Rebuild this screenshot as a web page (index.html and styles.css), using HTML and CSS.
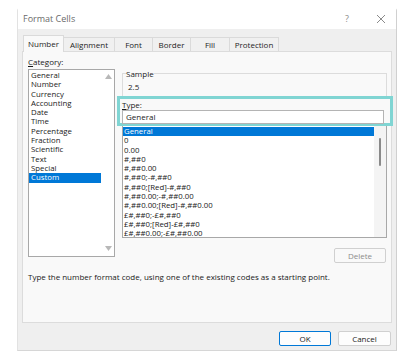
FILE: index.html
```html
<!DOCTYPE html>
<html lang="en">
<head>
  <meta charset="UTF-8" />
  <meta name="viewport" content="width=device-width, initial-scale=1.0"/>
  <title>Format Cells</title>
  <link rel="stylesheet" href="styles.css">
</head>
<body>
  <div class="dialog">
    <div class="titlebar">
      <span class="title">Format Cells</span>
      <span class="help">?</span>
      <svg class="close" width="10" height="10" viewBox="0 0 10 10"><path d="M1 1L9 9M9 1L1 9" stroke="#8a8a8a" stroke-width="1"/></svg>
    </div>
    <div class="body">
      <div class="tabs">
        <div class="tab active">Number</div>
        <div class="tab">Alignment</div>
        <div class="tab">Font</div>
        <div class="tab">Border</div>
        <div class="tab">Fill</div>
        <div class="tab">Protection</div>
      </div>
      <div class="panel">
        <div class="columns">
          <div class="left">
            <div class="label"><u>C</u>ategory:</div>
            <div class="catlist">
              <div class="items">
                <div class="item">General</div>
                <div class="item">Number</div>
                <div class="item">Currency</div>
                <div class="item">Accounting</div>
                <div class="item">Date</div>
                <div class="item">Time</div>
                <div class="item">Percentage</div>
                <div class="item">Fraction</div>
                <div class="item">Scientific</div>
                <div class="item">Text</div>
                <div class="item">Special</div>
                <div class="item selected">Custom</div>
              </div>
              <div class="vscroll">
                <svg width="7" height="5" viewBox="0 0 7 5"><path d="M0 5L3.5 0L7 5Z" fill="#b8b8b8"/></svg>
                <svg width="7" height="5" viewBox="0 0 7 5"><path d="M0 0L3.5 5L7 0Z" fill="#b8b8b8"/></svg>
              </div>
            </div>
          </div>
          <div class="right">
            <fieldset class="sample">
              <legend>Sample</legend>
              <div class="sample-value">2.5</div>
            </fieldset>
            <div class="type-box">
              <div class="label"><u>T</u>ype:</div>
              <div class="type-input">General</div>
            </div>
            <div class="fmtlist">
              <div class="items">
                <div class="item selected">General</div>
                <div class="item">0</div>
                <div class="item">0.00</div>
                <div class="item">#,##0</div>
                <div class="item">#,##0.00</div>
                <div class="item">#,##0;-#,##0</div>
                <div class="item">#,##0;[Red]-#,##0</div>
                <div class="item">#,##0.00;-#,##0.00</div>
                <div class="item">#,##0.00;[Red]-#,##0.00</div>
                <div class="item">£#,##0;-£#,##0</div>
                <div class="item">£#,##0;[Red]-£#,##0</div>
                <div class="item">£#,##0.00;-£#,##0.00</div>
              </div>
              <div class="fmtscroll"><div class="thumb"></div></div>
            </div>
            <div class="delete-row">
              <div class="btn disabled">Delete</div>
            </div>
          </div>
        </div>
        <div class="desc">Type the number format code, using one of the existing codes as a starting point.</div>
      </div>
      <div class="footer">
        <div class="btn ok">OK</div>
        <div class="btn">Cancel</div>
      </div>
    </div>
  </div>
</body>
</html>
```
FILE: styles.css
```css
* {
  box-sizing: border-box;
}

body {
  margin: 0;
  background: #fff;
  font-family: "Open Sans", "Noto Sans", sans-serif;
  font-size: 8px;
  color: #1a1a1a;
}

.dialog {
  margin: 8px 0 0 17px;
  width: 380px;
  height: 343px;
  border-left: 1px solid #e2e2e2;
  border-right: 1px solid #d0d0d0;
  border-bottom: 1px solid #d6d6d6;
  border-radius: 3px 3px 0 0;
  display: flex;
  flex-direction: column;
}

.titlebar {
  height: 21px;
  flex-shrink: 0;
  display: flex;
  align-items: center;
  padding: 0 10px 0 5px;
  background: #fff;
}

.title {
  flex: 1;
  color: #6a6a6a;
  font-size: 9px;
}

.help {
  color: #8a8a8a;
  font-size: 9px;
  margin-right: 27px;
}

.body {
  flex: 1;
  background: #efefef;
  padding: 6px 4px 0 4px;
  display: flex;
  flex-direction: column;
}

.tabs {
  display: flex;
  height: 16px;
  flex-shrink: 0;
  align-items: flex-end;
  padding-left: 1px;
}

.tab {
  height: 14px;
  line-height: 13px;
  border: 1px solid #dadada;
  border-bottom: none;
  border-left: none;
  background: #f0f0f0;
  text-align: center;
  font-size: 8px;
  color: #1e1e1e;
}

.tab:nth-child(2) { width: 51px; }
.tab:nth-child(3) { width: 38px; }
.tab:nth-child(4) { width: 38px; }
.tab:nth-child(5) { width: 39px; }
.tab:nth-child(6) { width: 49px; }

.tab.active {
  width: 41px;
  height: 17px;
  line-height: 15px;
  background: #f9f9f9;
  border-left: 1px solid #dadada;
  position: relative;
  top: 1px;
  z-index: 1;
}

.panel {
  height: 272px;
  flex-shrink: 0;
  background: #f9f9f9;
  border: 1px solid #dcdcdc;
  padding: 5px 5px 0 5px;
}

.columns {
  display: flex;
  gap: 2px;
}

.left {
  width: 87px;
  flex-shrink: 0;
}

.label {
  height: 9px;
  line-height: 9px;
  margin-bottom: 3px;
}

.catlist {
  height: 188px;
  border: 1px solid #a8a8a8;
  background: #fff;
  display: flex;
}

.items {
  flex: 1;
  padding-top: 1px;
  font-size: 7.8px;
}

.item {
  height: 9.3px;
  line-height: 9.3px;
  padding-left: 2px;
  white-space: nowrap;
}

.catlist .item {
  padding-left: 2px;
  margin-right: 1px;
}

.item.selected {
  background: #0078d7;
  color: #fff;
}

.vscroll {
  width: 12px;
  display: flex;
  flex-direction: column;
  justify-content: space-between;
  align-items: center;
  padding: 4px 0 5px;
}

.right {
  width: 276px;
  flex-shrink: 0;
  display: flex;
  flex-direction: column;
}

.sample {
  margin: 12px 6px 0 5px;
  padding: 0 0 0 5px;
  border: 1px solid #dcdcdc;
  height: 28px;
}

.sample legend {
  padding: 0;
  margin-left: -2px;
  line-height: 9px;
}

.sample-value {
  padding-top: 3px;
  line-height: 12px;
}

.type-box {
  border: 3px solid #80d5d3;
  padding: 1px 6px 0 2px;
  margin-top: -1px;
  height: 30px;
  position: relative;
}

.type-box .label {
  margin-bottom: 1px;
}

.type-input {
  height: 14px;
  line-height: 12px;
  border: 1px solid #b4b4b4;
  background: #fff;
  padding-left: 3px;
}

.fmtlist {
  margin: 0 6px 0 5px;
  height: 112px;
  border: 1px solid #a8a8a8;
  border-top: none;
  background: #fff;
  display: flex;
}

.fmtlist .items {
  padding-top: 1px;
}

.fmtlist .item {
  padding-left: 1px;
}

.fmtscroll {
  width: 12px;
  background: #f4f4f4;
  display: flex;
  justify-content: center;
  padding-top: 12px;
}

.thumb {
  width: 2px;
  height: 28px;
  background: #8a8a8a;
  border-radius: 1px;
}

.delete-row {
  display: flex;
  justify-content: flex-end;
  margin: 10px 7px 0 0;
}

.btn {
  width: 53px;
  height: 15px;
  line-height: 13px;
  border: 1px solid #d0d0d0;
  border-radius: 2px;
  background: #fdfdfd;
  text-align: center;
  color: #1a1a1a;
}

.btn.disabled {
  width: 52px;
  color: #8c8c8c;
  background: #f9f9f9;
}

.desc {
  margin-top: 9px;
  line-height: 10px;
}

.footer {
  display: flex;
  justify-content: flex-end;
  gap: 7px;
  padding: 8px 1px 0 0;
}

.btn.ok {
  width: 52px;
  border: 1px solid #0078d7;
}
```
